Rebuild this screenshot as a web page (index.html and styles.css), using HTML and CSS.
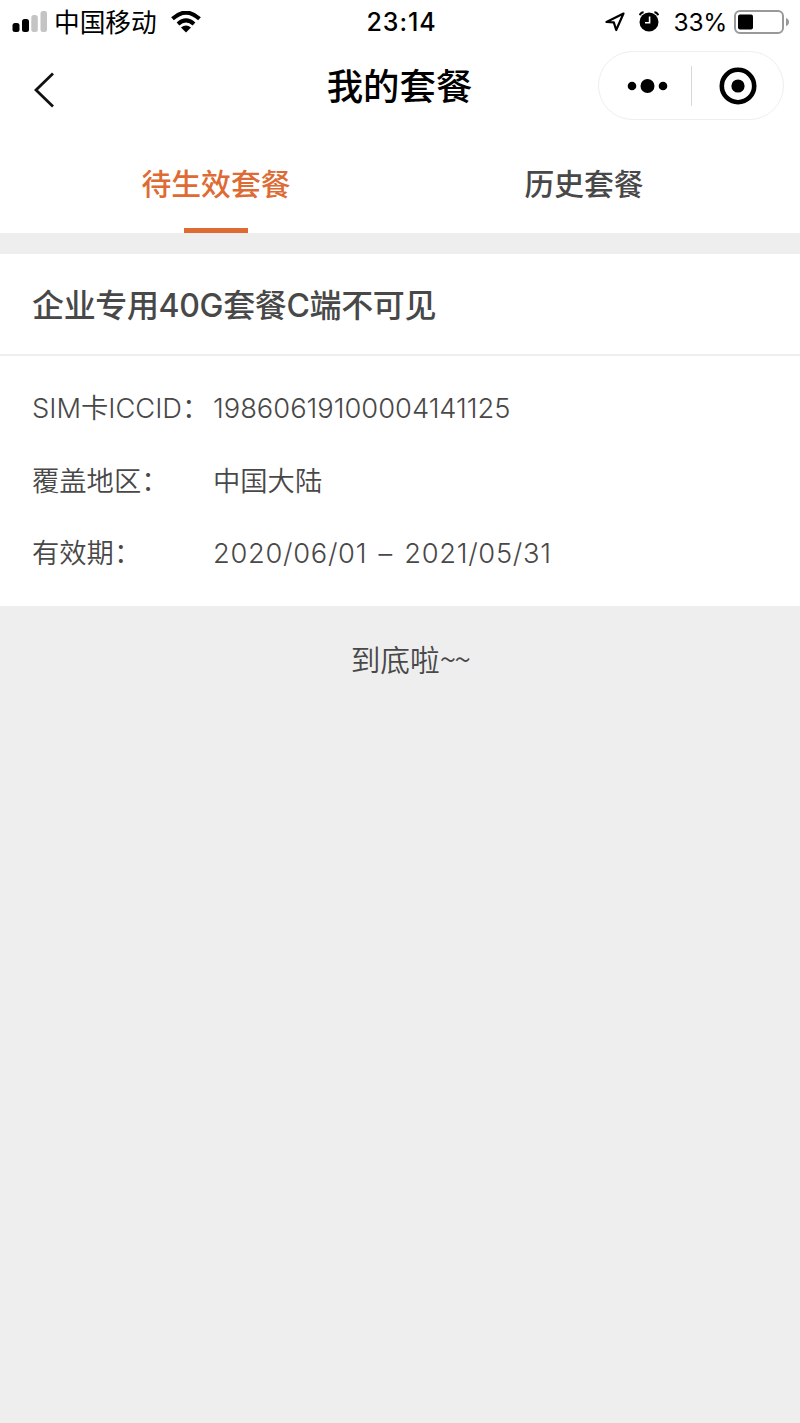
FILE: index.html
```
<!DOCTYPE html>
<html lang="zh-CN">
<head>
    <meta charset="UTF-8">
    <meta name="viewport" content="width=device-width, initial-scale=1.0">
    <title>我的套餐</title>
    <link rel="stylesheet" href="styles.css">
</head>
<body>
    <div id="container">
        <header>
            <div class="status">
                <div class="status_left">
                    <svg class="signal" width="36" height="24" viewBox="0 0 36 24">
                        <rect x="0.5" y="13" width="7" height="9" rx="2.5"/>
                        <rect x="10" y="9" width="7" height="13" rx="2.5"/>
                        <rect class="off" x="19.300" y="5" width="6.500" height="17" rx="2.500"/>
                        <rect class="off" x="28.500" y="1" width="6.500" height="21" rx="2.500"/>
                    </svg>
                    <span class="carrier">中国移动</span>
                    <svg class="wifi" width="30" height="22" viewBox="0 0 30 22">
                        <path d="M1.500 7.800 Q15 -4.600 28.500 7.800" stroke-width="4"/>
                        <path d="M7 13 Q15 5.800 23 13" stroke-width="4"/>
                        <path class="dot" d="M10 16.500 Q15 12.600 20 16.500 L15 21.500 Z"/>
                    </svg>
                </div>
                <div class="time">23:14</div>
                <div class="status_right">
                    <svg class="location" width="20" height="20" viewBox="0 0 20 20">
                        <path d="M18.500 1.500 L1.500 10 L8.800 10.400 L11.200 18 Z"/>
                    </svg>
                    <svg class="alarm" width="20" height="21" viewBox="0 0 20 21">
                        <circle cx="10" cy="11" r="9.500"/>
                        <path class="bell" d="M0.800 4.200 Q1.500 1.400 4.600 1.200 M19.200 4.200 Q18.500 1.400 15.400 1.200"/>
                        <path class="hand" d="M10.600 5.500 V11.700 H6"/>
                    </svg>
                    <span class="percent">33%</span>
                    <svg class="battery" width="56" height="24" viewBox="0 0 56 24">
                        <rect class="shell" x="1" y="1" width="48" height="22" rx="5"/>
                        <rect x="4" y="4.500" width="15" height="15" rx="2"/>
                        <path class="cap" d="M52 8 Q55 9 55 12 Q55 15 52 16 Z"/>
                    </svg>
                </div>
            </div>
            <div class="nav">
                <svg class="back" width="22" height="38" viewBox="0 0 22 38">
                    <path d="M19 2.500 L2 19 L19 35.500"/>
                </svg>
                <h1>我的套餐</h1>
                <div class="capsule">
                    <svg class="more" width="42" height="16" viewBox="0 0 42 16">
                        <circle cx="5" cy="8" r="4.300"/>
                        <circle cx="20.500" cy="8" r="7"/>
                        <circle cx="36" cy="8" r="4.300"/>
                    </svg>
                    <span class="line"></span>
                    <svg class="close" width="38" height="38" viewBox="0 0 38 38">
                        <circle class="ring" cx="19" cy="19" r="16.200"/>
                        <circle cx="19" cy="19" r="6.600"/>
                    </svg>
                </div>
            </div>
        </header>
        <div class="tabs">
            <div class="tab active">待生效套餐</div>
            <div class="tab">历史套餐</div>
        </div>
        <div class="card">
            <h2>企业专用40G套餐C端不可见</h2>
            <ul>
                <li><span class="item_title">SIM卡ICCID：</span><span class="item_text">19860619100004141125</span></li>
                <li><span class="item_title">覆盖地区：</span><span class="item_text">中国大陆</span></li>
                <li><span class="item_title">有效期：</span><span class="item_text date">2020/06/01 – 2021/05/31</span></li>
            </ul>
        </div>
        <p class="bottom">到底啦<span class="wave">~~</span></p>
    </div>
</body>
</html>
```
FILE: styles.css
```
* {
    margin: 0;
    padding: 0;
    box-sizing: border-box;
}

body {
    background-color: #eee;
    color: #484848;
    font-family: Inter, "Noto Sans CJK SC", sans-serif;
}

#container {
    width: 800px;
    min-height: 1423px;
}

header {
    height: 136px;
    background-color: #fff;
    color: #000;
}

/* 状态栏 */
.status {
    display: grid;
    grid-template-columns: 1fr auto 1fr;
    align-items: center;
    height: 44px;
    padding: 0 10px 0 12px;
}

.status_left,
.status_right {
    display: flex;
    align-items: center;
}

.status_right {
    justify-content: flex-end;
}

.signal .off {
    fill: #c4c4c4;
}

.carrier {
    margin-left: 6px;
    padding-top: 2px;
    font-size: 25.7px;
    line-height: 40px;
}

.wifi {
    margin-left: 14px;
    fill: none;
    stroke: #000;
}

.wifi .dot {
    fill: #000;
    stroke: none;
}

.time {
    padding-left: 1px;
    font-size: 25px;
    font-weight: 500;
    letter-spacing: 0.9px;
}

.location {
    margin-right: 14px;
    fill: none;
    stroke: #000;
    stroke-width: 2.2;
    stroke-linejoin: round;
}

.alarm {
    margin-bottom: 2px;
}

.alarm .bell,
.alarm .hand {
    fill: none;
    stroke: #000;
    stroke-width: 2;
}

.alarm .hand {
    stroke: #fff;
    stroke-width: 1.6;
}

.percent {
    margin: 0 7px 0 15px;
    font-size: 24.5px;
    letter-spacing: -0.3px;
}

.battery {
    margin-bottom: 1px;
}

.battery .shell {
    fill: none;
    stroke: #999;
    stroke-width: 2;
}

.battery .cap {
    fill: #999;
}

/* 标题栏 */
.nav {
    display: grid;
    grid-template-columns: 1fr auto 1fr;
    align-items: center;
    height: 83px;
    padding: 0 16px;
}

.back {
    margin: 8px 0 0 18px;
    fill: none;
    stroke: #111;
    stroke-width: 2.8;
}

.nav h1 {
    padding: 2px 1px 0 0;
    font-size: 36.4px;
    font-weight: 500;
    line-height: 50px;
}

.capsule {
    display: flex;
    justify-self: end;
    align-items: center;
    width: 186px;
    height: 69px;
    padding: 0 26px 0 28px;
    border: 1px solid #eee;
    border-radius: 35px;
}

.capsule .line {
    width: 1px;
    height: 40px;
    margin: 0 27px 0 22px;
    background-color: #d8d8d8;
}

.capsule svg {
    flex: none;
}

.close .ring {
    fill: none;
    stroke: #000;
    stroke-width: 4.6;
}

/* 标签 */
.tabs {
    display: flex;
    height: 97px;
    padding: 0 32px;
    background-color: #fff;
}

.tab {
    display: flex;
    flex-direction: column;
    align-items: center;
    justify-content: space-between;
    width: 50%;
    padding-top: 26px;
    font-size: 29.8px;
    font-weight: 500;
    line-height: 44px;
}

.tab.active {
    color: #dd6b33;
}

.tab.active::after {
    content: "";
    width: 64px;
    height: 5px;
    background-color: #dd6b33;
}

/* 套餐信息 */
.card {
    height: 352px;
    margin-top: 21px;
    background-color: #fff;
}

.card h2 {
    height: 102px;
    padding-left: 32px;
    border-bottom: 2px solid #eee;
    font-size: 32px;
    font-weight: 500;
    letter-spacing: -0.35px;
    line-height: 103px;
}

.card ul {
    padding: 16px 32px 0;
    list-style: none;
}

.card li {
    display: flex;
    height: 72.5px;
    font-size: 27.3px;
    font-weight: 350;
    line-height: 74px;
}

.item_title {
    width: 181px;
    white-space: nowrap;
}

.date {
    letter-spacing: 0.7px;
    word-spacing: 3px;
}

.bottom {
    padding: 31px 0 0 20px;
    font-family: "Noto Sans CJK SC", sans-serif;
    font-size: 29.7px;
    font-weight: 350;
    line-height: 44px;
    text-align: center;
}

.wave {
    letter-spacing: -1.5px;
}
```
